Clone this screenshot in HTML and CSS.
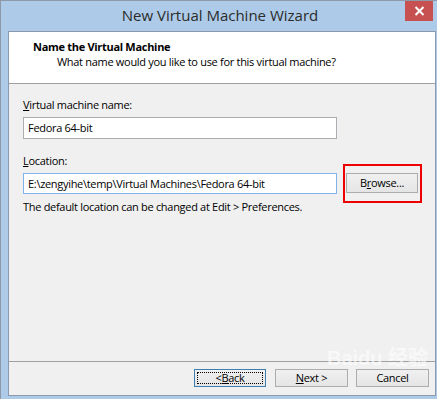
FILE: index.html
```html
<!DOCTYPE html>
<html>
<head>
<meta charset="utf-8">
<link rel="stylesheet" href="styles.css">
</head>
<body>
<div class="window">
  <div class="titlebar">
    <div class="title">New Virtual Machine Wizard</div>
    <div class="close">
      <svg width="11" height="10" viewBox="0 0 11 10"><path d="M1.5 1 L9.5 9 M9.5 1 L1.5 9" stroke="#fff" stroke-width="2"/></svg>
    </div>
  </div>
  <div class="client">
    <div class="header">
      <div class="heading">Name the Virtual Machine</div>
      <div class="subheading">What name would you like to use for this virtual machine?</div>
    </div>
    <div class="content">
      <div class="label"><u>V</u>irtual machine name:</div>
      <div class="input">Fedora 64-bit</div>
      <div class="label label-loc"><u>L</u>ocation:</div>
      <div class="row">
        <div class="input input-focus">E:\zengyihe\temp\Virtual Machines\Fedora 64-bit</div>
        <div class="browse-wrap">
          <div class="btn btn-browse">B<u>r</u>owse...</div>
          <div class="highlight"></div>
        </div>
      </div>
      <div class="help">The default location can be changed at Edit &gt; Preferences.</div>
    </div>
    <div class="footer">
      <div class="btn btn-default"><span class="focus">&lt; <u>B</u>ack</span></div>
      <div class="btn"><u>N</u>ext &gt;</div>
      <div class="btn">Cancel</div>
      <div class="watermark">Baidu 经验</div>
    </div>
  </div>
</div>
</body>
</html>
```
FILE: styles.css
```css
* { box-sizing: border-box; }
html, body { margin: 0; padding: 0; }
body {
  font-family: "Open Sans", "Noto Sans", sans-serif;
  font-size: 11px;
  letter-spacing: -0.3px;
  color: #000;
  background: #adcbe8;
}
.window {
  width: 437px;
  height: 399px;
  background: #adcbe8;
  border-top: 1px solid #8e9aa8;
  border-left: 1px solid #8e9aa8;
  display: flex;
  flex-direction: column;
  overflow: hidden;
}
.titlebar {
  height: 30px;
  position: relative;
  display: flex;
  justify-content: center;
  align-items: center;
  flex: none;
}
.title {
  font-family: "Open Sans", sans-serif;
  font-size: 15px;
  letter-spacing: 0;
  color: #2b2b2b;
  margin-top: -3px;
  margin-left: 2px;
}
.close {
  position: absolute;
  left: 404px;
  top: 0;
  width: 28px;
  height: 20px;
  background: #c75050;
  display: flex;
  align-items: center;
  justify-content: center;
}
.client {
  margin-left: 7px;
  width: 428px;
  height: 365px;
  border: 1px solid #8a99ac;
  background: #f0f0f0;
  display: flex;
  flex-direction: column;
}
.header {
  background: #fff;
  height: 52px;
  border-bottom: 1px solid #a0a0a0;
  padding: 7px 0 0 24px;
  flex: none;
}
.heading {
  font-weight: bold;
  line-height: 15px;
  font-size: 11px;
}
.subheading {
  padding-left: 24px;
  line-height: 16px;
}
.content {
  flex: 1;
  padding: 13px 0 0 14px;
}
.label {
  line-height: 16px;
  height: 16px;
}
.label-loc { margin-top: 14px; }
.input {
  margin-top: 4px;
  width: 314px;
  height: 22px;
  border: 1px solid #abadb3;
  background: #fff;
  padding-left: 4px;
  line-height: 20px;
}
.input-focus {
  border-color: #7eb4ea;
  height: 21px;
  line-height: 19px;
}
.row {
  display: flex;
  align-items: flex-start;
  gap: 9px;
}
.browse-wrap {
  position: relative;
  margin-top: 4px;
}
.btn {
  width: 73px;
  height: 18px;
  border: 1px solid #acacac;
  background: linear-gradient(#f0f0f0, #e5e5e5);
  display: flex;
  align-items: center;
  justify-content: center;
  line-height: 14px;
}
.btn-browse {
  width: 72px;
  height: 20px;
}
.highlight {
  position: absolute;
  left: -3px;
  top: -9px;
  width: 79px;
  height: 39px;
  border: 2px solid #ee0000;
}
.help {
  margin-top: 5px;
  line-height: 16px;
}
.footer {
  flex: none;
  height: 34px;
  border-top: 1px solid #a0a0a0;
  display: flex;
  justify-content: flex-end;
  padding: 7px 6px 0 0;
  gap: 8px;
  position: relative;
}
.btn-default {
  width: 72px;
  border-color: #3c7fb1;
  margin-right: 1px;
  padding: 2px;
}
.focus {
  width: 100%;
  height: 100%;
  border: 1px dotted #000;
  display: flex;
  align-items: center;
  justify-content: center;
}
.watermark {
  position: absolute;
  left: 318px;
  top: -15px;
  font-family: "Liberation Sans", "Noto Sans CJK SC", sans-serif;
  font-size: 20px;
  font-weight: bold;
  letter-spacing: 0;
  color: rgba(255,255,255,0.6);
  line-height: 22px;
  white-space: nowrap;
  pointer-events: none;
}
```
